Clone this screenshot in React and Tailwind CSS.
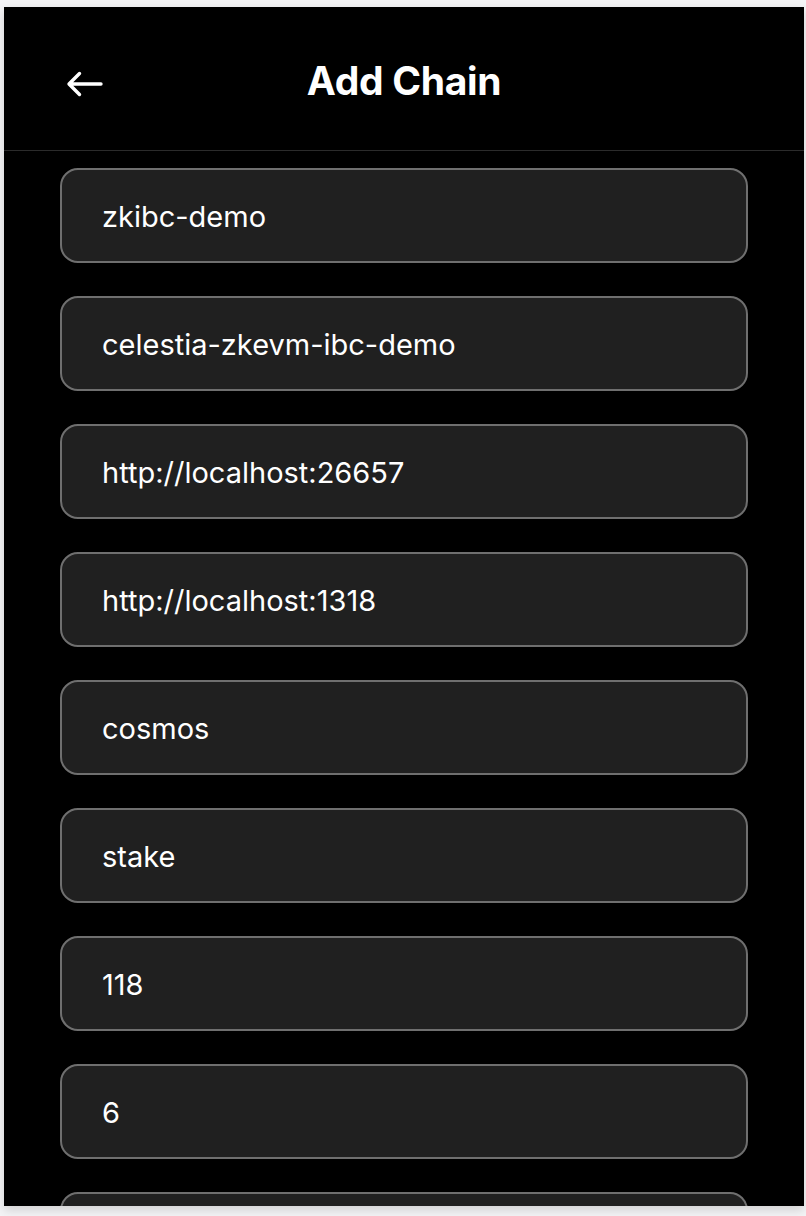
import React from "react";

const fields = [
  "zkibc-demo",
  "celestia-zkevm-ibc-demo",
  "http://localhost:26657",
  "http://localhost:1318",
  "cosmos",
  "stake",
  "118",
  "6",
  "",
];

const ChainInput = ({ value }) => (
  <input
    readOnly
    value={value}
    className="block w-full h-[95px] shrink-0 rounded-[18px] border-2 border-[#6f6f6f] bg-[#202020] px-[40px] pt-[2px] text-[29px] text-white outline-none"
    style={{ fontFamily: "Inter, 'Noto Sans', sans-serif" }}
  />
);

const AddChain = () => {
  return (
    <div className="h-[1216px] w-full bg-[#f4f4f6] pt-[7px] pl-[4px] overflow-hidden">
      <div className="flex h-[1199px] w-[800px] flex-col overflow-hidden bg-black shadow-[0_4px_10px_rgba(0,0,0,0.15)]">
        <div className="relative flex h-[144px] shrink-0 items-center justify-center border-b border-[#2b2b2b]">
          <button className="absolute left-[59px] top-[61px] p-[2px]">
            <svg width="38" height="28" viewBox="0 0 38 28" fill="none">
              <path
                d="M36 14H5M14.5 3.5L4 14L14.5 24.5"
                stroke="white"
                strokeWidth="3.4"
                strokeLinecap="round"
                strokeLinejoin="round"
              />
            </svg>
          </button>
          <h1
            className="mt-[6px] text-[39px] font-bold text-white tracking-[-0.3px]"
            style={{ fontFamily: "Inter, 'Noto Sans', sans-serif" }}
          >
            Add Chain
          </h1>
        </div>
        <div className="flex flex-col gap-[33px] px-[56px] pt-[17px]">
          {fields.map((f, i) => (
            <ChainInput key={i} value={f} />
          ))}
        </div>
      </div>
    </div>
  );
};

export default function App() {
  return <AddChain />;
}
